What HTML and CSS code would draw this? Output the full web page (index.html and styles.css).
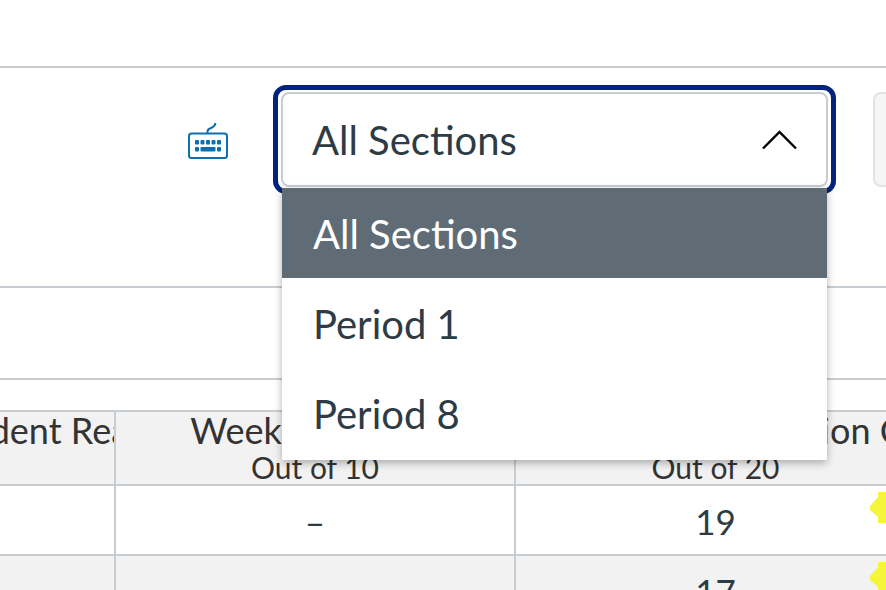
FILE: index.html
```html
<!DOCTYPE html>
<html lang="en">
<head>
  <meta charset="UTF-8" />
  <title>Gradebook</title>
  <link rel="stylesheet" href="styles.css">
</head>
<body>
  <div class="top-bar"></div>

  <div class="toolbar">
    <svg class="keyboard-icon" viewBox="0 0 40 37" width="40" height="37">
      <path class="kb-wire" d="M19.5 11 V9.5 Q19.5 7.5 22 6.5 Q27 4.5 27.5 1" />
      <rect class="kb-body" x="1" y="11.5" width="38" height="24.5" rx="2.5" />
      <g class="kb-keys">
        <rect x="7" y="18" width="4" height="4.5" rx="1" />
        <rect x="12.5" y="18" width="4" height="4.5" rx="1" />
        <rect x="18" y="18" width="4" height="4.5" rx="1" />
        <rect x="23.5" y="18" width="4" height="4.5" rx="1" />
        <rect x="29" y="18" width="4" height="4.5" rx="1" />
        <rect x="7" y="25" width="4" height="4.5" rx="1" />
        <rect x="12.5" y="25" width="15" height="4.5" rx="1" />
        <rect x="29" y="25" width="4" height="4.5" rx="1" />
      </g>
    </svg>

    <div class="select-ring">
      <div class="select-box">
        <span>All Sections</span>
        <svg class="caret" viewBox="0 0 36 20" width="36" height="20">
          <path d="M1 18.5 L17.5 2 L34 18.5" />
        </svg>
      </div>
    </div>

    <div class="side-button"></div>
  </div>

  <div class="filter-row"></div>

  <div class="table-wrap">
    <div class="grade-table">
      <div class="cell head col-1"><span class="clip-title">Student Reading Log</span></div>
      <div class="cell head"><span class="title">Week 2 Articles</span><span class="sub">Out of 10</span></div>
      <div class="cell head"><span class="title">Chapter 3: Discussion C</span><span class="sub">Out of 20</span></div>

      <div class="cell col-1"></div>
      <div class="cell">–</div>
      <div class="cell">19<span class="flag"></span></div>

      <div class="cell col-1 alt"></div>
      <div class="cell alt"></div>
      <div class="cell alt">17<span class="flag"></span></div>
    </div>
  </div>

  <ul class="dropdown">
    <li class="active">All Sections</li>
    <li>Period 1</li>
    <li>Period 8</li>
  </ul>
</body>
</html>
```

FILE: styles.css
```css
html, body {
  height: 590px;
  overflow: hidden;
}

body {
  margin: 0;
  position: relative;
  background: #fff;
  font-family: Lato, "Open Sans", sans-serif;
  color: #2d3b45;
}

.top-bar {
  height: 66px;
  border-bottom: 2px solid #c7cdd1;
}

.toolbar {
  height: 201px;
  border-bottom: 2px solid #c7cdd1;
  display: flex;
  align-items: flex-start;
  padding-left: 188px;
  padding-top: 17px;
}

.keyboard-icon {
  margin-top: 37px;
  flex: none;
}

.kb-wire {
  fill: none;
  stroke: #0e6fb0;
  stroke-width: 2;
}

.kb-body {
  fill: #fff;
  stroke: #0e6fb0;
  stroke-width: 2;
}

.kb-keys rect {
  fill: #0e6fb0;
}

.select-ring {
  margin-left: 45px;
  width: 563px;
  height: 109px;
  box-sizing: border-box;
  border: 5px solid #03237f;
  border-radius: 13px;
  padding: 2px 3px;
  flex: none;
}

.select-box {
  height: 95px;
  box-sizing: border-box;
  border: 2px solid #c7cdd1;
  border-radius: 8px;
  display: flex;
  justify-content: space-between;
  align-items: center;
  padding: 0 28px 0 29px;
  font-size: 40px;
}

.caret path {
  fill: none;
  stroke: #000;
  stroke-width: 2.4;
}

.side-button {
  margin-left: 37px;
  margin-top: 7px;
  width: 40px;
  height: 95px;
  flex: none;
  box-sizing: border-box;
  background: #f5f5f5;
  border: 2px solid #e2e2e2;
  border-radius: 8px;
}

.filter-row {
  height: 90px;
  border-bottom: 2px solid #c7cdd1;
}

.table-wrap {
  margin-top: 30px;
  height: 180px;
  overflow: hidden;
}

.grade-table {
  display: grid;
  grid-template-columns: 116px 400px 401px;
  grid-template-rows: 74px 70px 70px;
  width: 917px;
  border-top: 2px solid #c7cdd1;
}

.cell {
  position: relative;
  box-sizing: border-box;
  border-right: 2px solid #c7cdd1;
  border-bottom: 2px solid #c7cdd1;
  padding-top: 2px;
  display: flex;
  align-items: center;
  justify-content: center;
  font-size: 35px;
}

.head,
.alt {
  background: #f2f2f2;
}

.head {
  padding-top: 0;
  flex-direction: column;
  justify-content: flex-start;
  color: #333;
  overflow: hidden;
  white-space: nowrap;
}

.clip-title {
  align-self: flex-start;
  margin-left: -62px;
  font-size: 36px;
  line-height: 36px;
}

.title {
  font-size: 36px;
  line-height: 36px;
}

.sub {
  margin-top: 3px;
  font-size: 30px;
  line-height: 32px;
}

.flag {
  position: absolute;
  left: 354px;
  top: 6px;
  width: 40px;
  height: 31px;
  background: #f5f53c;
  clip-path: polygon(8px 0, 100% 0, 100% 100%, 8px 100%, 8px 25px, 0 18px, 0 14px, 8px 5px);
}

.dropdown {
  position: absolute;
  left: 282px;
  top: 188px;
  width: 545px;
  margin: 0;
  padding: 0 0 2px;
  list-style: none;
  background: #fff;
  box-shadow: 0 3px 8px rgba(0, 0, 0, 0.3);
  font-size: 40px;
}

.dropdown li {
  height: 90px;
  line-height: 92px;
  padding-left: 31px;
}

.dropdown .active {
  background: #606c75;
  color: #fff;
}
```
